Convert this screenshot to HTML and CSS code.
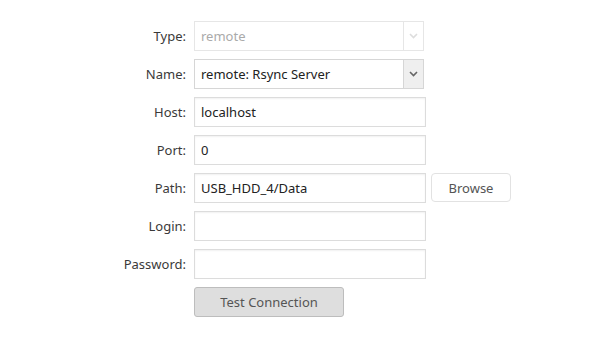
FILE: index.html
```html
<!DOCTYPE html>
<html lang="en">
<head>
    <meta charset="UTF-8">
    <title>Remote Backup</title>
    <link rel="stylesheet" href="styles.css">
</head>
<body>
    <form class="form">
        <label class="label">Type:</label>
        <div class="select disabled">
            <span class="select-value">remote</span>
            <span class="select-arrow">
                <svg width="9" height="6" viewBox="0 0 9 6"><path d="M1 1 L4.5 4.5 L8 1" fill="none" stroke="currentColor" stroke-width="1.6"/></svg>
            </span>
        </div>
        <span></span>

        <label class="label">Name:</label>
        <div class="select">
            <span class="select-value">remote: Rsync Server</span>
            <span class="select-arrow">
                <svg width="9" height="6" viewBox="0 0 9 6"><path d="M1 1 L4.5 4.5 L8 1" fill="none" stroke="currentColor" stroke-width="1.6"/></svg>
            </span>
        </div>
        <span></span>

        <label class="label">Host:</label>
        <input class="input" type="text" value="localhost">
        <span></span>

        <label class="label">Port:</label>
        <input class="input" type="text" value="0">
        <span></span>

        <label class="label">Path:</label>
        <input class="input" type="text" value="USB_HDD_4/Data">
        <button type="button" class="btn-browse">Browse</button>

        <label class="label">Login:</label>
        <input class="input" type="text" value="">
        <span></span>

        <label class="label">Password:</label>
        <input class="input" type="password" value="">
        <span></span>

        <span></span>
        <button type="button" class="btn-test">Test Connection</button>
        <span></span>
    </form>
</body>
</html>
```

FILE: styles.css
```css
body {
    margin: 0;
    background-color: #fff;
    font-family: "Noto Sans", "Open Sans", sans-serif;
    font-size: 13px;
    color: #333;
}
.form {
    display: grid;
    grid-template-columns: 186px 232px 80px;
    grid-auto-rows: 30px;
    column-gap: 8px;
    row-gap: 8px;
    padding-top: 21px;
}
.label {
    align-self: center;
    text-align: right;
    color: #3a3a3a;
}
.input {
    box-sizing: border-box;
    width: 100%;
    height: 30px;
    margin: 0;
    padding: 0 6px;
    border: 1px solid #dcdcdc;
    box-shadow: inset 0 1px 2px rgba(0, 0, 0, 0.06);
    font-family: inherit;
    font-size: 13px;
    color: #222;
    outline: none;
}
.select {
    box-sizing: border-box;
    display: flex;
    width: 230px;
    height: 30px;
    border: 1px solid #d6d6d6;
    background-color: #fff;
}
.select-value {
    flex: 1;
    padding: 0 6px;
    line-height: 28px;
    color: #222;
}
.select-arrow {
    width: 19px;
    border-left: 1px solid #d6d6d6;
    background-color: #efefef;
    display: flex;
    align-items: center;
    justify-content: center;
    color: #666;
}
.select.disabled {
    border-color: #e6e6e6;
}
.select.disabled .select-value {
    color: #aaa;
}
.select.disabled .select-arrow {
    background-color: #fff;
    border-left-color: #e6e6e6;
    color: #ddd;
}
.btn-browse {
    height: 29px;
    width: 80px;
    margin-left: -3px;
    border: 1px solid #e2e2e2;
    border-radius: 4px;
    background-color: #fff;
    font-family: inherit;
    font-size: 13px;
    color: #555;
}
.btn-test {
    width: 150px;
    height: 30px;
    border: 1px solid #bdbdbd;
    border-radius: 3px;
    background-color: #dedede;
    font-family: inherit;
    font-size: 13px;
    color: #555;
}
```
